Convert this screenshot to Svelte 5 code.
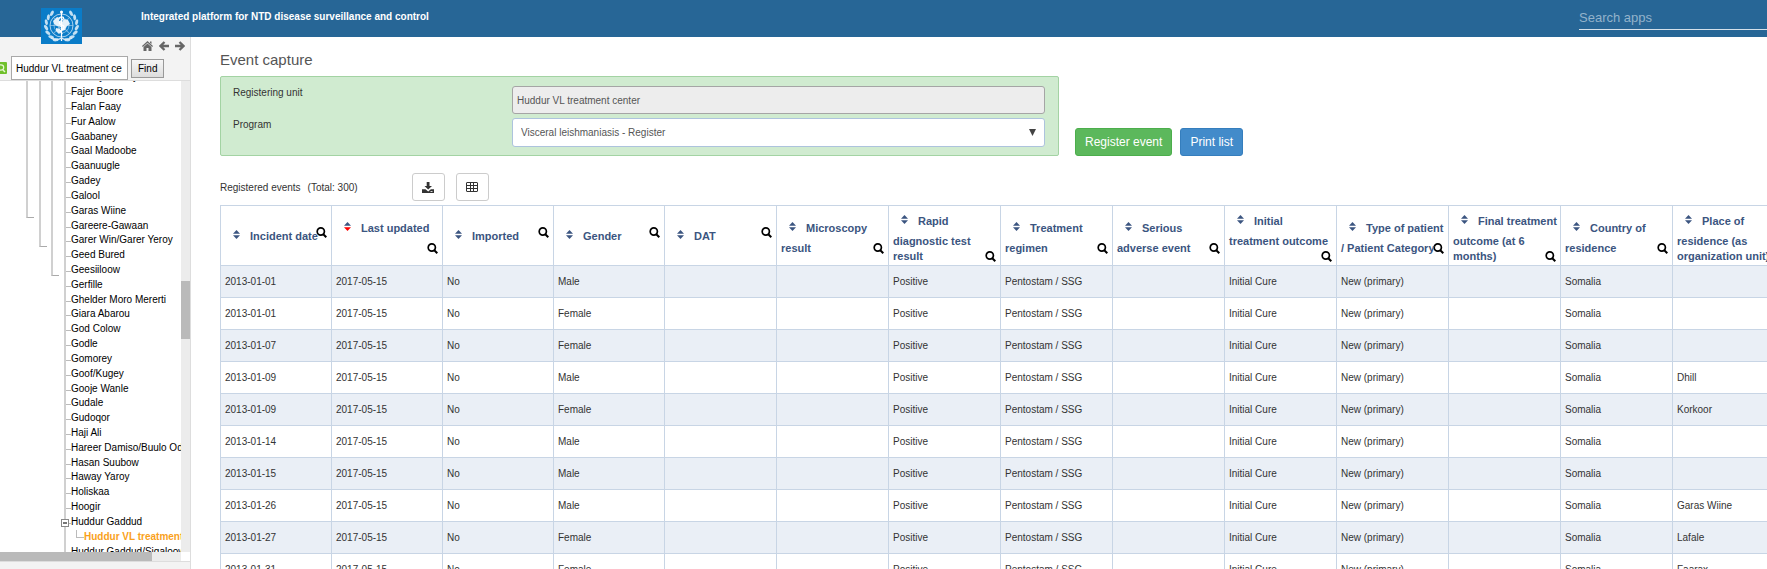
<script>
  const units = [
    'Eedkay Wadoy', 'Fajer Boore', 'Falan Faay', 'Fur Aalow', 'Gaabaney', 'Gaal Madoobe', 'Gaanuugle',
    'Gadey', 'Galool', 'Garas Wiine', 'Gareere-Gawaan', 'Garer Win/Garer Yeroy', 'Geed Bured',
    'Geesiiloow', 'Gerfille', 'Ghelder Moro Mererti', 'Giara Abarou', 'God Colow', 'Godle', 'Gomorey',
    'Goof/Kugey', 'Gooje Wanle', 'Gudale', 'Gudoqor', 'Haji Ali', 'Hareer Damiso/Buulo Odey',
    'Hasan Suubow', 'Haway Yaroy', 'Holiskaa', 'Hoogir',
  ];
  const tree = [
    ...units.map((name) => ({ name })),
    { name: 'Huddur Gaddud', open: true },
    { name: 'Huddur VL treatment center', child: true },
    { name: 'Huddur Gaddud/Sigaloow' },
  ];
  const columns = [
    'Incident date', 'Last updated', 'Imported', 'Gender', 'DAT', 'Microscopy result',
    'Rapid diagnostic test result', 'Treatment regimen', 'Serious adverse event',
    'Initial treatment outcome', 'Type of patient / Patient Category',
    'Final treatment outcome (at 6 months)', 'Country of residence',
    'Place of residence (as organization unit)',
  ];
  const sorted = 1;
  const events = [
    ['2013-01-01', 'Male', ''],
    ['2013-01-01', 'Female', ''],
    ['2013-01-07', 'Female', ''],
    ['2013-01-09', 'Male', 'Dhill'],
    ['2013-01-09', 'Female', 'Korkoor'],
    ['2013-01-14', 'Male', ''],
    ['2013-01-15', 'Male', ''],
    ['2013-01-26', 'Male', 'Garas Wiine'],
    ['2013-01-27', 'Female', 'Lafale'],
    ['2013-01-31', 'Female', 'Faarax'],
  ];
  const rows = events.map(([date, gender, place]) => [
    date, '2017-05-15', 'No', gender, '', '', 'Positive', 'Pentostam / SSG', '',
    'Initial Cure', 'New (primary)', '', 'Somalia', place,
  ]);
  const spokes = [0, 45, 90, 135];
  const leaves = [0, 1, 2, 3, 4, 5, 6];
</script>

<div class="page">
  <header class="topbar">
    <a class="logo" href="#home" aria-label="Home">
      <svg viewBox="0 0 41 36" width="41" height="36">
        <rect width="41" height="36" fill="#0a7cc8" />
        <g fill="none" stroke="#cfe6f6" stroke-width="1">
          <circle cx="20.500" cy="17.500" r="11.500" opacity=".8" />
          <circle cx="20.500" cy="17.500" r="7.500" opacity=".5" />
          <circle cx="20.500" cy="17.500" r="3.500" opacity=".5" />
          {#each spokes as a}
            <path d="M9 17.500H32" transform="rotate({a} 20.500 17.500)" opacity=".5" />
          {/each}
        </g>
        <path d="M12 13l4-4 3 1-1 3 3 1 2-3 4 1 2 4-3 2-2 4-3 1-1-4-4-1-3-2zM15 20l4 1 1 3-2 2-3-3z" fill="#e3f1fa" />
        <g fill="#c3e0f3">
          {#each leaves as i}
            <ellipse cx="5" cy="17.500" rx="1.500" ry="3" transform="rotate({-68 + i * 20} 20.500 17.500) rotate(-24 5 17.500)" />
            <ellipse cx="36" cy="17.500" rx="1.500" ry="3" transform="rotate({68 - i * 20} 20.500 17.500) rotate(24 36 17.500)" />
          {/each}
        </g>
        <path d="M20.500 3V33M18 10c5-3 6 1 2.500 2.500s-3 3.500.500 4.500 2 4-.500 5 0 3 1 4" fill="none" stroke="#fff" stroke-width="1.200" />
        <circle cx="20.500" cy="4" r="1.500" fill="#fff" />
        <path d="M10 30q6 3 10.500 0 4.500 3 10.500 0" fill="none" stroke="#d5e9f7" stroke-width="1.500" />
      </svg>
    </a>
    <span class="brand">Integrated platform for NTD disease surveillance and control</span>
    <input class="apps" type="search" placeholder="Search apps" aria-label="Search apps" />
  </header>

  <div class="body">
    <aside>
      <div class="tools">
        <nav>
          <a href="#home" aria-label="Home">
            <svg viewBox="0 0 11 10" width="11" height="10"><path d="M5.500 0L11 5l-.8.9L5.500 1.700.8 5.900 0 5zM8 .6h1.500V3L8 1.700zM5.500 2.600l4 3.500V10H6.500V7h-2v3h-3V6.100z" fill="#666" /></svg>
          </a>
          <a href="#back" aria-label="Back">
            <svg viewBox="0 0 10 10" width="10" height="10"><path d="M5.500 1L1.500 5l4 4M2 5h8" fill="none" stroke="#666" stroke-width="2.300" /></svg>
          </a>
          <a href="#forward" aria-label="Forward">
            <svg viewBox="0 0 10 10" width="10" height="10"><path d="M4.500 1l4 4-4 4M8 5H0" fill="none" stroke="#666" stroke-width="2.300" /></svg>
          </a>
        </nav>
        <form class="find" onsubmit={(e) => e.preventDefault()}>
          <svg class="badge" viewBox="0 0 12 12" width="12" height="12"><rect width="12" height="12" rx="1" fill="#6fc02c" /><circle cx="6" cy="5.500" r="2.700" fill="none" stroke="#e6f7d4" stroke-width="1.200" /><path d="M8 8l2 2" stroke="#e6f7d4" stroke-width="1.400" /></svg>
          <input type="text" aria-label="Organisation unit" value="Huddur VL treatment ce" />
          <button type="submit">Find</button>
        </form>
      </div>
      <div class="tree">
        <div class="pane">
          <i class="rail r1"></i><i class="rail r2"></i><i class="rail r3"></i>
          <ul>
            {#each tree as unit}
              <li class:child={unit.child}>
                {#if unit.open}<button class="toggle" aria-label="Collapse"></button>{/if}
                <a href="#unit">{unit.name}</a>
              </li>
            {/each}
          </ul>
        </div>
        <div class="vbar"><div class="thumb"></div></div>
        <div class="hbar"><div class="thumb"></div></div>
      </div>
      <div class="foot"></div>
    </aside>

    <main>
      <h1>Event capture</h1>
      <div class="top">
        <div class="panel">
          <label for="unit">Registering unit</label>
          <input id="unit" type="text" disabled value="Huddur VL treatment center" />
          <label for="program">Program</label>
          <div class="pick">
            <select id="program"><option>Visceral leishmaniasis - Register</option></select>
            <svg viewBox="0 0 7 7" width="7" height="7"><path d="M0 0h7L3.500 7z" fill="#444" /></svg>
          </div>
        </div>
        <button class="btn green">Register event</button>
        <button class="btn blue">Print list</button>
      </div>

      <div class="summary">
        <span>Registered events</span><span class="total">(Total: 300)</span>
        <button aria-label="Download">
          <svg viewBox="0 0 12 11" width="12" height="11"><path d="M4.700 0h2.800v4H10L6.200 7.500 2.500 4h2.200zM0 7.300h3.500l2.700 2.200 2.700-2.200H12V11H0z" fill="#333" /><path d="M8.500 9.500h2" stroke="#fff" stroke-width=".8" /></svg>
        </button>
        <button aria-label="Columns">
          <svg viewBox="0 0 12 10" width="12" height="10"><path d="M1 .5h10q.5 0 .5.500v8q0 .5-.5.500H1Q.5 9.500.5 9V1Q.5.500 1 .5zM.5 3.500h11M.5 6.500h11M4.500.500v9M7.500.500v9" fill="none" stroke="#333" /></svg>
        </button>
      </div>

      <table>
        <colgroup>
          {#each columns as _, i}<col class:narrow={i < 4} />{/each}
        </colgroup>
        <thead>
          <tr>
            {#each columns as column, i}
              <th scope="col">
                <button class="sort" aria-label="Sort">
                  <svg viewBox="0 0 7 9" width="7" height="9"><path d="M3.500 0L7 3.700H0z" fill="#3b5580" /><path d="M0 5.300h7L3.500 9z" fill={i === sorted ? '#f00' : '#3b5580'} /></svg>
                </button>{column}{#if i === sorted}<br />{/if}<button class="filter" aria-label="Filter">
                  <svg viewBox="0 0 11 11" width="11" height="11"><circle cx="4.800" cy="4.500" r="3.600" fill="none" stroke="#000" stroke-width="1.700" /><path d="M7.300 7.200l3 3.100" stroke="#000" stroke-width="2" /></svg>
                </button>
              </th>
            {/each}
          </tr>
        </thead>
        <tbody>
          {#each rows as row}
            <tr>{#each row as cell}<td>{cell}</td>{/each}</tr>
          {/each}
        </tbody>
      </table>
    </main>
  </div>
</div>

<style>
  .page {
    height: 100vh;
    display: flex;
    flex-direction: column;
    overflow: hidden;
    background: #fff;
    color: #333;
    font: 10px/15px 'Liberation Sans', Arial, sans-serif;
  }
  .page *, .page *::before, .page *::after { box-sizing: border-box; }
  button, input, select { font: inherit; color: inherit; margin: 0; }
  button { cursor: pointer; }
  svg { display: block; }
  a { color: inherit; text-decoration: none; }

  .topbar {
    flex: none;
    display: flex;
    align-items: flex-start;
    height: 37px;
    padding-left: 41px;
    background: #276696;
    color: #fff;
  }
  .logo { position: relative; z-index: 2; margin-top: 8px; }
  .brand { margin: 9px auto 0 59px; font-weight: bold; white-space: nowrap; }
  .apps {
    flex: none;
    width: 200px;
    height: 24px;
    margin: 6px -12px 0 0;
    padding: 0;
    border: 0;
    border-bottom: 1px solid #d4e0ea;
    background: none;
    font-size: 13px;
    appearance: none;
  }
  .apps::placeholder { color: #93b3cb; opacity: 1; }

  .body { flex: 1; display: flex; min-height: 0; }
  aside {
    flex: none;
    display: flex;
    flex-direction: column;
    width: 191px;
    border-right: 1px solid #ddd;
    background: #f3f3f3;
    color: #000;
    overflow: hidden;
  }
  .tools { border-bottom: 1px solid #ddd; }
  nav { display: flex; justify-content: flex-end; gap: 6px; padding: 4px 5px 5px 0; }
  .find { display: flex; align-items: center; }
  .badge { margin: 0 4px 0 -5px; }
  .find input {
    width: 117px;
    height: 24px;
    padding: 0 4px;
    border: 1px solid #a9a9a9;
    background: #fff;
  }
  .find button {
    height: 19px;
    margin-left: 3px;
    padding: 0 6px;
    border: 1px solid #999;
    background: linear-gradient(#f6f6f6, #ddd);
    line-height: 17px;
  }
  .tree {
    flex: 1;
    display: grid;
    grid-template: minmax(0, 1fr) 9px / minmax(0, 1fr) 9px;
    min-height: 0;
    background: #fff;
  }
  .pane { position: relative; overflow: hidden; }
  ul {
    display: grid;
    grid-auto-rows: 1fr;
    height: 489px;
    margin: -11px 0 0 64px;
    padding: 0;
    border-left: 2px solid #d0d0d0;
    line-height: 14px;
    list-style: none;
    white-space: nowrap;
  }
  li { position: relative; display: flex; align-items: center; }
  li::before { content: ''; flex: none; width: 5px; height: 1px; margin-top: 3px; background: #bbb; }
  li.child { padding-left: 10px; color: #f9a11b; font-weight: bold; }
  li.child::before {
    width: 8px;
    height: 8px;
    margin-top: -6px;
    border: solid #bbb;
    border-width: 0 0 1px 1px;
    background: none;
  }
  .toggle {
    position: absolute;
    left: -5px;
    top: 4px;
    width: 8px;
    height: 8px;
    padding: 0;
    border: 1px solid #888;
    background: linear-gradient(#777, #777) center / 4px 2px no-repeat #fff;
  }
  .rail { position: absolute; top: 0; width: 8px; border-left: 2px solid #d0d0d0; border-bottom: 1px solid #aaa; }
  .r1 { left: 26px; height: 137px; }
  .r2 { left: 39px; height: 166px; }
  .r3 { left: 51px; height: 195px; }
  .vbar, .hbar { background: #ececec; }
  .thumb { background: #bababa; }
  .vbar .thumb { height: 58px; margin-top: 200px; }
  .hbar .thumb { width: 152px; height: 9px; }
  .foot { flex: none; height: 8px; border-top: 1px solid #ddd; }

  main { flex: 1; min-width: 0; padding: 13px 0 0 29px; overflow: hidden; }
  h1 { margin: 0 0 6px; color: #555; font-size: 15px; font-weight: normal; line-height: 20px; }
  .top { display: flex; align-items: flex-end; }
  .panel {
    flex: 0 1 839px;
    display: grid;
    grid-template-columns: minmax(0, 279fr) minmax(0, 533fr);
    row-gap: 4px;
    margin-right: 16px;
    padding: 9px 13px 8px 12px;
    border: 1px solid #a3d3a3;
    border-radius: 2px;
    background: #d0ebd0;
  }
  .panel label { line-height: 13px; }
  .panel input, .panel select {
    width: 100%;
    height: 28px;
    padding: 0 4px;
    border: 1px solid #a5a5a5;
    border-radius: 3px;
    background: #ededed;
    color: #555;
  }
  .pick { display: grid; align-items: center; }
  .pick > * { grid-area: 1 / 1; }
  .pick svg { justify-self: end; margin-right: 9px; pointer-events: none; }
  .panel select { height: 29px; padding: 0 8px; border-color: #adc3dd; background: #fff; appearance: none; }
  .btn {
    flex: none;
    height: 28px;
    padding: 0 9px;
    border: 1px solid;
    border-radius: 3px;
    color: #fff;
    font-size: 12px;
    white-space: nowrap;
  }
  .green { margin-right: 8px; background: #5cb85c; border-color: #4cae4c; }
  .blue { background: #428bca; border-color: #357ebd; }

  .summary { display: flex; align-items: center; padding: 17px 0 4px; }
  .total { width: 104px; margin-left: 7px; }
  .summary button {
    display: grid;
    place-items: center;
    width: 33px;
    height: 28px;
    margin-right: 11px;
    padding: 0;
    border: 1px solid #ccc;
    border-radius: 3px;
    background: #fff;
  }

  table {
    width: calc(100% + 18px);
    table-layout: fixed;
    border-collapse: collapse;
  }
  .narrow { width: 111px; }
  th, td { border: 1px solid #c8d5e5; text-align: left; vertical-align: middle; }
  th { height: 60px; padding: 2px 2px 0 4px; color: #3b5580; font-size: 11px; }
  td { height: 32px; padding: 0 4px; white-space: nowrap; }
  tbody tr:nth-child(odd) { background: #eaeff6; }
  .sort {
    height: 24px;
    width: 25px;
    padding: 0 0 5px 8px;
    border: 0;
    background: none;
    vertical-align: middle;
  }
  .filter { float: right; height: 15px; margin: 0 2px 0 -5px; padding: 2px 0; border: 0; background: none; }
</style>
